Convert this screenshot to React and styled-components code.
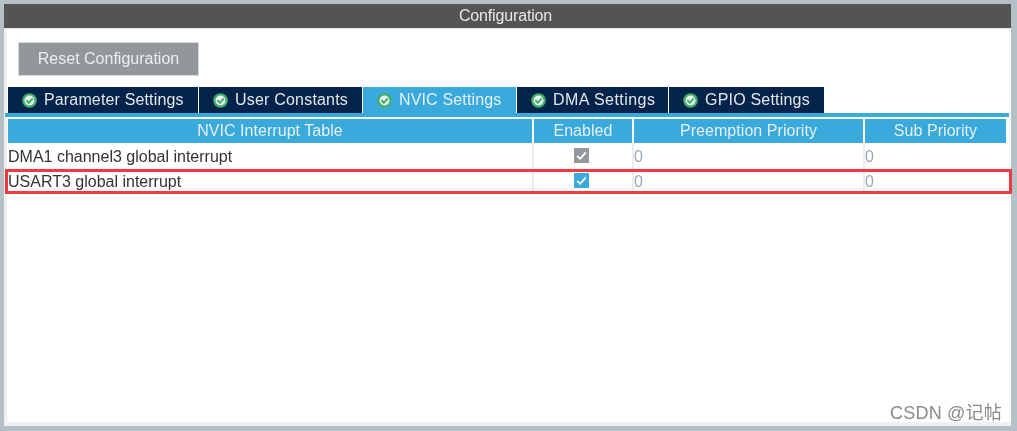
import React from "react";
import styled, { createGlobalStyle } from "styled-components";

const GlobalStyle = createGlobalStyle`
  html, body {
    margin: 0;
    padding: 0;
    background: #b4bfc6;
  }
  body {
    font-family: "Liberation Sans", Arial, sans-serif;
  }
`;

const tabs = [
  { label: "Parameter Settings", width: 191, tracking: 0.15 },
  { label: "User Constants", width: 164, tracking: 0.2 },
  { label: "NVIC Settings", width: 154, tracking: 0.15, active: true },
  { label: "DMA Settings", width: 152, tracking: 0.45 },
  { label: "GPIO Settings", width: 156, tracking: 0.2 },
];

const rows = [
  { name: "DMA1 channel3 global interrupt", locked: true },
  { name: "USART3 global interrupt", highlighted: true },
];

const CheckIcon = () => (
  <svg width="15" height="15" viewBox="0 0 15 15">
    <circle cx="7.5" cy="7.5" r="7.3" fill="#3fae6b" />
    <circle cx="7.5" cy="7.5" r="5" fill="#e9f5ee" />
    <path d="M4.4 7.3 L6.8 9.8 L10.8 5.4" fill="none" stroke="#3fae6b" strokeWidth="2" />
  </svg>
);

const App = () => (
  <Page>
    <GlobalStyle />
    <Panel>
      <TitleBar>Configuration</TitleBar>
      <Body>
        <ResetButton type="button">Reset Configuration</ResetButton>
        <TabRow>
          {tabs.map((tab) => (
            <Tab key={tab.label} $active={tab.active} $width={tab.width} $tracking={tab.tracking}>
              <CheckIcon />
              {tab.label}
            </Tab>
          ))}
        </TabRow>
        <TabLine />
        <Table>
          <HeaderRow>
            <HeaderCell>NVIC Interrupt Table</HeaderCell>
            <HeaderCell>Enabled</HeaderCell>
            <HeaderCell>Preemption Priority</HeaderCell>
            <HeaderCell>Sub Priority</HeaderCell>
          </HeaderRow>
          {rows.map((row) => (
            <Row key={row.name} $highlighted={row.highlighted}>
              <NameCell>{row.name}</NameCell>
              <CheckCell>
                <CheckBox $locked={row.locked}>
                  <svg width="15" height="15" viewBox="0 0 15 15">
                    <path d="M3.2 7.8 L6.2 10.8 L11.8 4.4" fill="none" stroke="#fff" strokeWidth="1.8" />
                  </svg>
                </CheckBox>
              </CheckCell>
              <ValueCell>0</ValueCell>
              <ValueCell>0</ValueCell>
            </Row>
          ))}
        </Table>
        <Watermark>CSDN @记帖</Watermark>
      </Body>
    </Panel>
  </Page>
);

export default App;

const Page = styled.div`
  box-sizing: border-box;
  height: 431px;
  padding: 4px 6px 5px 4px;
  filter: blur(0.4px);
`;

const Panel = styled.div`
  height: 422px;
  display: flex;
  flex-direction: column;
  background: #ffffff;
  border-left: 3px solid #eef0f2;
  border-bottom: 4px solid #eef0f2;
  box-sizing: border-box;
`;

const TitleBar = styled.div`
  height: 24px;
  margin-left: -3px;
  padding-right: 4px;
  background: #545553;
  border-bottom: 1px solid #e4e6e8;
  color: #e6e8e8;
  font-size: 16px;
  letter-spacing: -0.15px;
  line-height: 24px;
  text-align: center;
`;

const Body = styled.div`
  flex: 1;
  display: flex;
  flex-direction: column;
  align-items: flex-start;
  position: relative;
`;

const ResetButton = styled.button`
  width: 181px;
  height: 34px;
  margin: 13px 0 0 11px;
  padding: 0;
  background: #93979b;
  border: 1px solid #d8dadc;
  color: #eceeee;
  font-family: inherit;
  font-size: 16px;
`;

const TabRow = styled.div`
  display: flex;
  gap: 1px;
  margin: 11px 0 0 1px;
`;

const Tab = styled.div`
  box-sizing: border-box;
  width: ${(p) => p.$width - 1}px;
  height: 26px;
  display: flex;
  align-items: center;
  gap: 7px;
  padding-left: 14px;
  background: ${(p) => (p.$active ? "#3aa9dc" : "#04234a")};
  color: ${(p) => (p.$active ? "#e4f1f8" : "#e2e6ea")};
  font-size: 16px;
  letter-spacing: ${(p) => p.$tracking}px;
  white-space: nowrap;
`;

const TabLine = styled.div`
  align-self: stretch;
  height: 4px;
  margin: 0 2px 0 -2px;
  background: #3aa9dc;
  flex-shrink: 0;
`;

const Table = styled.div`
  margin: 2px 0 0 1px;
  width: 998px;
`;

const columns = "524px 98px 229px 141px";

const HeaderRow = styled.div`
  display: grid;
  grid-template-columns: ${columns};
  column-gap: 2px;
  height: 24px;
  margin-bottom: 1px;
`;

const HeaderCell = styled.div`
  background: #3aa9dc;
  color: #e4f1f8;
  font-size: 16px;
  letter-spacing: 0.05px;
  line-height: 24px;
  text-align: center;
`;

const Row = styled.div`
  position: relative;
  display: grid;
  grid-template-columns: ${columns};
  column-gap: 2px;
  height: 25px;
  color: #333333;
  font-size: 16px;
  line-height: 25px;

  ${(p) =>
    p.$highlighted &&
    `
    &::after {
      content: "";
      position: absolute;
      top: 0;
      left: -3px;
      right: -6px;
      bottom: 0;
      border: 3px solid #f23a3e;
      pointer-events: none;
    }
  `}
`;

const NameCell = styled.div`
  white-space: nowrap;
`;

const CheckCell = styled.div`
  display: flex;
  align-items: center;
  justify-content: center;
  padding: 0 3px 2px 0;
  box-shadow: -2px 0 0 #e9ecf1, 2px 0 0 #e9ecf1;
`;

const CheckBox = styled.div`
  width: 15px;
  height: 15px;
  background: ${(p) => (p.$locked ? "#94989c" : "#3aa9dc")};
  display: flex;
`;

const ValueCell = styled.div`
  color: #9aa6b4;
  box-shadow: -2px 0 0 #e9ecf1;
`;

const Watermark = styled.div`
  position: absolute;
  right: 9px;
  bottom: -2px;
  color: #8a8a8a;
  font-size: 18px;
  letter-spacing: 0.2px;
  font-family: "Liberation Sans", "Noto Sans CJK SC", sans-serif;
`;
